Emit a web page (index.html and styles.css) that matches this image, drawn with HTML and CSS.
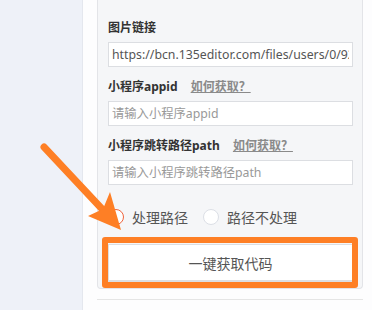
FILE: index.html
```html
<!DOCTYPE html>
<html lang="zh-CN">
<head>
    <meta charset="UTF-8">
    <meta name="viewport" content="width=device-width, initial-scale=1.0">
    <title>小程序跳转设置</title>
    <link rel="stylesheet" href="styles.css">
</head>
<body>
    <div class="page">
        <aside class="sidebar"></aside>

        <main class="main">
            <div class="panel">
                <div class="form-item">
                    <div class="form-label">图片链接</div>
                    <input class="form-input" type="text" value="https://bcn.135editor.com/files/users/0/92/202308/mini_cover.png">
                </div>

                <div class="form-item">
                    <div class="form-label">小程序appid <a href="#" class="help-link">如何获取？</a></div>
                    <input class="form-input" type="text" placeholder="请输入小程序appid">
                </div>

                <div class="form-item">
                    <div class="form-label">小程序跳转路径path <a href="#" class="help-link">如何获取？</a></div>
                    <input class="form-input" type="text" placeholder="请输入小程序跳转路径path">
                </div>

                <div class="radio-group">
                    <label class="radio checked"><span class="radio-dot"></span>处理路径</label>
                    <label class="radio"><span class="radio-dot"></span>路径不处理</label>
                </div>

                <div class="btn-wrap">
                    <button class="get-code-btn">一键获取代码</button>
                    <!-- annotation frame drawn over the button -->
                    <div class="mark-box"></div>
                </div>
            </div>
            <div class="divider"></div>
        </main>

        <!-- annotation arrow pointing at the radio -->
        <svg class="mark-arrow" width="372" height="310" viewBox="0 0 372 310">
            <line x1="44" y1="147" x2="103" y2="210" stroke="#fe7f25" stroke-width="7" stroke-linecap="round"/>
            <polygon points="110,192 121,230 88,216 103,209" fill="#fe7f25"/>
        </svg>
    </div>
</body>
</html>
```

FILE: styles.css
```css
:root {
    --side-bg: #eef1f8;
    --panel-bg: #f5f6f8;
    --border-color: #e3e4e8;
    --input-border: #dcdee2;
    --text-color: #333;
    --muted-color: #8a8a8a;
    --mark-color: #fe7f25;
}

body {
    margin: 0;
    padding: 0;
    font-family: "Noto Sans", "Noto Sans CJK SC", sans-serif;
    color: var(--text-color);
    background-color: #fff;
}

.page {
    position: relative;
    display: flex;
    width: 372px;
    height: 310px;
    overflow: hidden;
}

.sidebar {
    width: 82px;
    flex-shrink: 0;
    background-color: var(--side-bg);
    border-right: 1px solid #e4e7ee;
}

.main {
    flex: 1;
    padding: 0 9px 0 14px;
    background-color: #fdfdfe;
}

.panel {
    background-color: var(--panel-bg);
    border: 1px solid var(--border-color);
    border-top: none;
    border-radius: 0 0 4px 4px;
    padding: 18px 9px 6px 10px;
}

.form-item {
    margin-bottom: 10px;
}

.form-label {
    font-size: 12px;
    font-weight: bold;
    line-height: 20px;
    margin-bottom: 4px;
    color: var(--text-color);
}

.help-link {
    margin-left: 10px;
    color: var(--muted-color);
    text-decoration: underline;
}

.form-input {
    display: block;
    box-sizing: border-box;
    width: 245px;
    height: 25px;
    margin: 0;
    padding: 0 3px;
    border: 1px solid var(--input-border);
    background-color: #fff;
    font-family: inherit;
    font-size: 12.3px;
    color: #555;
    outline: none;
}

.form-input::placeholder {
    color: #999;
}

.radio-group {
    display: flex;
    align-items: center;
    gap: 15px;
    margin-top: 20px;
    height: 24px;
}

.radio {
    display: flex;
    align-items: center;
    gap: 8px;
    font-size: 14px;
    color: #555;
}

.radio-dot {
    width: 14px;
    height: 14px;
    border: 1px solid #dcdfe6;
    border-radius: 50%;
    background-color: #fff;
}

.radio.checked .radio-dot {
    border-color: #f0643c;
}

.btn-wrap {
    position: relative;
    margin-top: 15px;
}

.get-code-btn {
    display: block;
    width: 245px;
    height: 38px;
    margin: 0;
    border: 1px solid var(--input-border);
    border-bottom-width: 2px;
    background-color: #fff;
    font-family: inherit;
    font-size: 14px;
    color: #555;
}

.mark-box {
    position: absolute;
    left: -6px;
    top: -7px;
    right: -5px;
    bottom: -6px;
    border: 6px solid var(--mark-color);
    border-radius: 3px;
}

.divider {
    margin-top: 10px;
    border-top: 1px solid #e5e5e5;
}

.mark-arrow {
    position: absolute;
    left: 0;
    top: 0;
    pointer-events: none;
}
```
